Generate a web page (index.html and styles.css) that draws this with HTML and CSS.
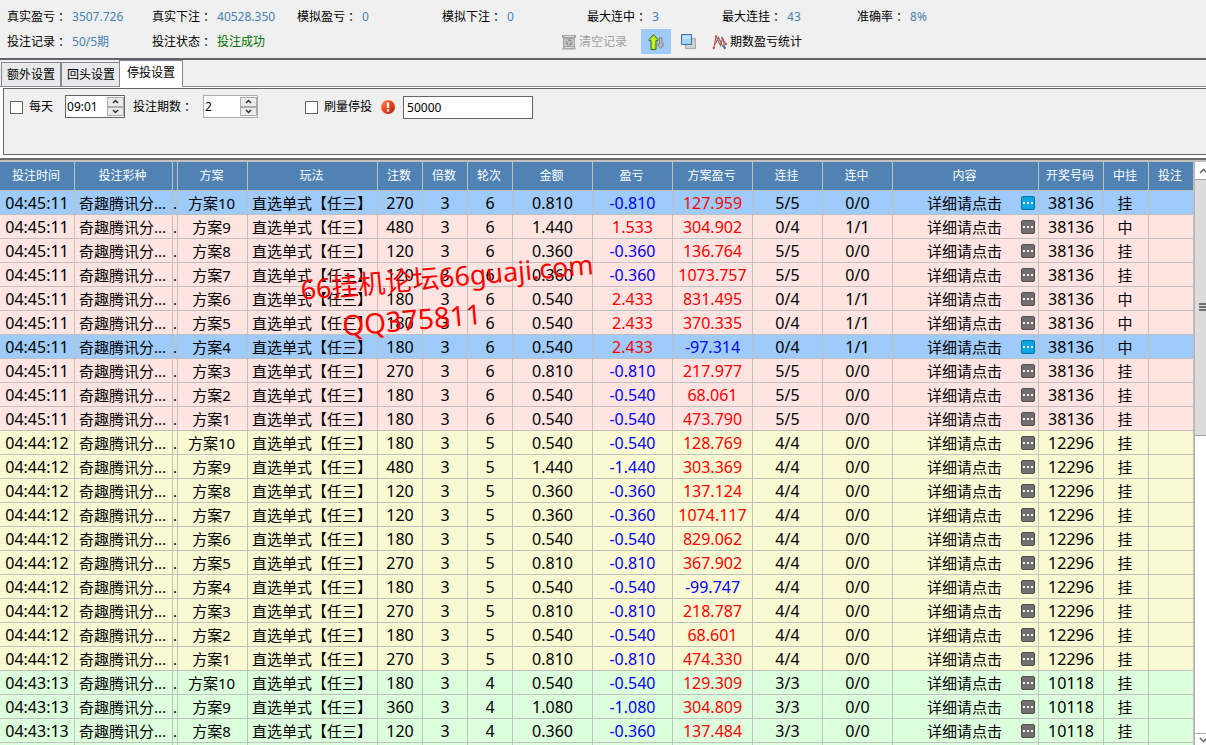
FILE: index.html
```
<!DOCTYPE html>
<html lang="zh-CN">
<head>
<meta charset="utf-8">
<title>投注记录</title>
<link rel="stylesheet" href="styles.css">
</head>
<body>
<header class="summary">
  <div class="stats">
    <div class="stat">真实盈亏<span class="colon">：</span><span class="value">3507.726</span></div>
    <div class="stat">真实下注<span class="colon">：</span><span class="value">40528.350</span></div>
    <div class="stat">模拟盈亏<span class="colon">：</span><span class="value">0</span></div>
    <div class="stat">模拟下注<span class="colon">：</span><span class="value">0</span></div>
    <div class="stat">最大连中<span class="colon">：</span><span class="value">3</span></div>
    <div class="stat">最大连挂<span class="colon">：</span><span class="value">43</span></div>
    <div class="stat">准确率<span class="colon">：</span><span class="value">8%</span></div>
  </div>
  <div class="actions">
    <div class="stat">投注记录<span class="colon">：</span><span class="value">50/5期</span></div>
    <div class="stat">投注状态<span class="colon">：</span><span class="value success">投注成功</span></div>
    <div class="toolbar">
      <button type="button" class="tool" disabled>
        <svg width="16" height="16" viewBox="0 0 16 16" aria-hidden="true"><path d="M1 1h14v3h-1v9l1 2.500H1L2 13V4H1z" fill="#a6a6a6"/><path d="M3 2.500h10M3.500 13.500h9" stroke="#dcdcdc"/><path d="M3 5h10v7H3z" fill="#c4c4c4"/><circle cx="8" cy="8.500" r="2.500" fill="none" stroke="#8a8a8a" stroke-width="1.500" stroke-dasharray="3.700 1.500"/></svg>
        清空记录
      </button>
      <button type="button" class="tool pressed" aria-label="排序" aria-pressed="true">
        <svg width="16" height="16" viewBox="0 0 16 16" aria-hidden="true"><path d="M5.500 0.700 10 5.500v1.200H8V15.500H3V6.700H1V5.500z" fill="#a4ea14" stroke="#3f6d1c"/><path d="M5.500 3v11" stroke="#d4f83c" stroke-width="2"/><path d="M11.500 3.500h2.500v6.500h1.700v1L12.800 14.500 9.800 11v-1h1.700z" fill="#b9b9b9" stroke="#858585"/></svg>
      </button>
      <button type="button" class="tool" aria-label="窗口">
        <svg width="16" height="16" viewBox="0 0 16 16" aria-hidden="true"><path d="M4.500 4.500h10v10h-10z" fill="#cfcfcf" stroke="#a9a9a9"/><path d="M.5.5h10v10H.5z" fill="#a5d4fb" stroke="#3d74a8"/><path d="M2 2h7v3H2z" fill="#c2e3ff"/></svg>
      </button>
      <button type="button" class="tool">
        <svg width="16" height="16" viewBox="0 0 16 16" fill="none" aria-hidden="true"><path d="M3 10.500 6.500 3.500 10 11l2.500 3M9.500 3l2 4 1 6" stroke="#4779ad" stroke-width="1.200"/><path d="M1.800 14 4 2.500l4.500 9L10.500 4l3.500 6.500" stroke="#dc5132" stroke-width="1.200"/><circle cx="4" cy="2.500" r="1.200" fill="#dc5132"/><circle cx="1.800" cy="14" r="1.200" fill="#dc5132"/><circle cx="14" cy="10" r="1.200" fill="#dc5132"/><circle cx="12.800" cy="14" r="1.200" fill="#4779ad"/></svg>
        期数盈亏统计
      </button>
    </div>
  </div>
</header>

<nav class="tabs" role="tablist">
  <button type="button" class="tab" role="tab">额外设置</button>
  <button type="button" class="tab" role="tab">回头设置</button>
  <button type="button" class="tab active" role="tab" aria-selected="true">停投设置</button>
</nav>

<section class="settings">
  <div class="panel">
    <label class="check"><input type="checkbox">每天</label>
    <div class="spin dark">
      <input type="text" value="09:01" aria-label="时间">
      <span class="spin-buttons">
        <button type="button" aria-label="增加时间"><svg width="7" height="5" viewBox="0 0 7 5"><path d="M1 4l2.500-2.500L6 4"/></svg></button>
        <button type="button" aria-label="减少时间"><svg width="7" height="5" viewBox="0 0 7 5"><path d="M1 1l2.500 2.500L6 1"/></svg></button>
      </span>
    </div>
    <label class="period" for="periods">投注期数<span class="colon">：</span></label>
    <div class="spin">
      <input type="text" id="periods" value="2">
      <span class="spin-buttons">
        <button type="button" aria-label="增加期数"><svg width="7" height="5" viewBox="0 0 7 5"><path d="M1 4l2.500-2.500L6 4"/></svg></button>
        <button type="button" aria-label="减少期数"><svg width="7" height="5" viewBox="0 0 7 5"><path d="M1 1l2.500 2.500L6 1"/></svg></button>
      </span>
    </div>
    <label class="check volume"><input type="checkbox">刷量停投</label>
    <svg class="alert" width="14" height="14" viewBox="0 0 14 14" aria-hidden="true"><defs><linearGradient id="alert-fill" x1="0" y1="0" x2="1" y2="1"><stop offset="0" stop-color="#ff9468"/><stop offset=".45" stop-color="#f04a1c"/><stop offset="1" stop-color="#a81c10"/></linearGradient></defs><circle cx="7" cy="7" r="7" fill="url(#alert-fill)"/><path d="M5.800 2.500h2.400v5.500H5.800zM5.800 9.200h2.400v2.300H5.800z" fill="#fff"/></svg>
    <input class="amount" type="text" value="50000" aria-label="刷量停投数值">
  </div>
</section>

<main class="records">
  <div class="viewport">
    <table>
      <colgroup>
        <col class="c-time"><col class="c-lottery"><col class="c-issue"><col class="c-plan"><col class="c-play">
        <col class="c-small"><col class="c-small"><col class="c-small">
        <col class="c-money"><col class="c-money"><col class="c-money">
        <col class="c-streak"><col class="c-streak"><col class="c-content"><col class="c-code"><col class="c-small"><col class="c-small">
      </colgroup>
      <thead>
        <tr><th>投注时间</th><th>投注彩种</th><th></th><th>方案</th><th>玩法</th><th>注数</th><th>倍数</th><th>轮次</th><th>金额</th><th>盈亏</th><th>方案盈亏</th><th>连挂</th><th>连中</th><th>内容</th><th>开奖号码</th><th>中挂</th><th>投注</th></tr>
      </thead>
      <tbody id="rows"></tbody>
    </table>
  </div>
  <div class="scrollbar" aria-hidden="true">
    <div class="arrow up"><svg width="9" height="6" viewBox="0 0 9 6"><path d="M1 5l3.500-3.500L8 5"/></svg></div>
    <div class="thumb"><i></i><i></i><i></i></div>
    <div class="arrow down"><svg width="9" height="6" viewBox="0 0 9 6"><path d="M1 1l3.500 3.500L8 1"/></svg></div>
  </div>
</main>

<div class="watermark first">66挂机论坛66guaji.com</div>
<div class="watermark second">QQ375811</div>
<script src="records.js"></script>
</body>
</html>
```

FILE: styles.css
```
* { box-sizing: border-box; }

body {
  margin: 0;
  height: 100vh;
  overflow: hidden;
  display: flex;
  flex-direction: column;
  background: #fff;
  color: #000;
  font: 12px/16px "Noto Sans", "Noto Sans CJK SC", sans-serif;
}

button, input { font: inherit; color: inherit; }
svg { display: block; flex: none; }
.colon { padding-left: 3px; margin-right: -3px; }

/* Summary */
.summary {
  background: #f0f0f0;
  border-bottom: 2px solid #646468;
  padding: 4px 0 4px 7px;
}
.stats {
  display: grid;
  grid-template-columns: repeat(4, 145px) repeat(2, 135px) 1fr;
  height: 25px;
  align-items: center;
}
.stat { white-space: nowrap; }
.value { color: #4682b4; margin-left: 5px; }
.value.success { color: #007000; }
.actions { display: flex; align-items: center; height: 25px; }
.actions .stat { width: 145px; }
.toolbar { display: flex; align-items: center; margin-left: 264px; }
.tool {
  display: flex;
  align-items: center;
  gap: 2px;
  height: 25px;
  padding: 0;
  margin-right: 10px;
  border: 0;
  background: none;
  white-space: nowrap;
}
.tool:disabled { color: #a0a0a0; margin-right: 14px; }
.tool.pressed { background: #9ecbfa; padding: 0 7px; }
.tool:last-child { margin-left: 5px; }

/* Tabs */
.tabs {
  display: flex;
  align-items: flex-end;
  height: 27px;
  padding-left: 1px;
  background: #f0f0f0;
  border-bottom: 1px solid #8c8c90;
}
.tab {
  height: 24px;
  padding: 0 5px;
  border: 1px solid #828790;
  border-bottom: 0;
  background: #e9e9eb;
}
.tab + .tab { padding: 0 4px 0 5px; }
.tab.active {
  height: 27px;
  padding: 0 7px 2px;
  margin: 0 0 -1px -1px;
  background: #fff;
}

/* Settings panel */
.settings {
  padding: 1px 0 3px 3px;
  border-bottom: 2px solid #6c6c70;
}
.panel {
  display: flex;
  align-items: flex-start;
  height: 67px;
  padding: 6px 0 0 6px;
  background: #f0f0f0;
  border: 1px solid #646464;
  border-right: 0;
}
.check { display: flex; align-items: center; gap: 6px; height: 24px; }
.check input {
  appearance: none;
  width: 13px;
  height: 13px;
  margin: 0;
  border: 1px solid #646464;
  background: #fff;
}
.period { line-height: 24px; margin: 0 10px 0 8px; white-space: nowrap; }
.period .colon { margin-right: 0; padding-right: 0; }
.period { margin-right: 7px; }
.volume { margin-left: 47px; }
.spin {
  display: flex;
  width: 55px;
  height: 23px;
  border: 1px solid #abadb3;
  background: #fff;
}
.spin.dark { width: 60px; margin-left: 12px; border-color: #646464; }
.spin input {
  flex: 1;
  min-width: 0;
  padding: 0 1px;
  border: 0;
  background: none;
}
.spin-buttons { display: flex; flex-direction: column; width: 17px; padding: 1px 0; }
.spin-buttons button {
  flex: 1;
  display: flex;
  align-items: center;
  justify-content: center;
  padding: 0;
  border: 1px solid #acacac;
  background: #ececec;
}
.spin-buttons path { fill: none; stroke: #303030; stroke-width: 1.500; }
.alert { margin: 5px 8px 0 9px; }
.amount {
  width: 130px;
  height: 23px;
  margin-top: 1px;
  padding: 0 3px;
  border: 1px solid #646464;
  background: #fff;
}

/* Records */
.records {
  flex: 1;
  min-height: 0;
  display: flex;
  border-top: 2px solid #c0c0c0;
}
.viewport { flex: 1; min-width: 0; overflow: hidden; }
table {
  width: 100%;
  table-layout: fixed;
  border-collapse: separate;
  border-spacing: 0;
}
.c-time { width: 75px; }
.c-lottery { width: 98px; }
.c-issue { width: 5px; }
.c-plan { width: 70px; }
.c-play { width: 130px; }
.c-small { width: 45px; }
.c-money { width: 80px; }
.c-streak { width: 70px; }
.c-content { width: 146px; }
.c-code { width: 65px; }
th, td {
  padding: 0 2px 0 0;
  border: solid #c0c0c0;
  border-width: 0 1px 1px 0;
  text-align: center;
  white-space: nowrap;
  overflow: hidden;
}
th {
  height: 29px;
  background: #5082b4;
  color: #fff;
  font-weight: 400;
}
td { height: 24px; font-size: 15px; line-height: 22px; }
td.num { font-size: 16px; padding: 0; }
td.left { text-align: left; padding: 0 0 0 4px; }
td.dot { text-align: left; padding: 0; }
.pink { background: #ffe4e1; }
.yellow { background: #fafad2; }
.green { background: #dcffdc; }
.selected { background: #9ecbfa; }
.gain { color: #f00; }
.loss { color: #00f; }
.detail {
  display: grid;
  grid-template-columns: 1fr auto 1fr;
  align-items: center;
}
.detail span { grid-column: 2; }
.more {
  justify-self: end;
  display: flex;
  align-items: center;
  justify-content: center;
  gap: 2px;
  width: 14px;
  height: 14px;
  margin-right: 1px;
  padding: 0;
  border: 1px solid #505050;
  border-radius: 2px;
  background: #707070;
}
.more i { width: 2px; height: 2px; background: #fff; }
.selected .more { background: #08a5e3; border-color: #0870a8; }

/* Scrollbar */
.scrollbar {
  display: flex;
  flex-direction: column;
  width: 12px;
  overflow: hidden;
  border-left: 1px solid #b4b4b4;
  background: #fff;
}
.arrow { display: flex; align-items: center; height: 17px; padding-left: 4px; overflow: hidden; }
.arrow path { fill: none; stroke: #606060; stroke-width: 1.500; }
.down { margin-top: auto; height: 12px; border-top: 1px solid #b4b4b4; }
.thumb {
  display: flex;
  flex-direction: column;
  justify-content: center;
  align-items: flex-end;
  gap: 1px;
  height: 44%;
  border: solid #a0a0a0;
  border-width: 1px 0;
  background: #dcdcdc;
}
.thumb i { width: 7px; height: 2px; background: #707070; }

/* Watermark laid over the table */
.watermark {
  position: absolute;
  color: #f00;
  font-size: 27px;
  line-height: 36px;
  white-space: nowrap;
  transform: rotate(-5deg);
  pointer-events: none;
}
.first { left: 300px; top: 259px; }
.second { left: 342px; top: 301px; font-size: 28px; }
```

FILE: records.js
```
// Each batch shares its time, round, draw number and row colour.
// Row: plan, bets, amount, profit, plan profit, losing streak, winning streak, selected
const batches = [
  { time: "04:45:11", round: 6, code: "38136", tone: "pink", rows: [
    [10, 270, "0.810", "-0.810", "127.959", "5/5", "0/0", true],
    [9, 480, "1.440", "1.533", "304.902", "0/4", "1/1"],
    [8, 120, "0.360", "-0.360", "136.764", "5/5", "0/0"],
    [7, 120, "0.360", "-0.360", "1073.757", "5/5", "0/0"],
    [6, 180, "0.540", "2.433", "831.495", "0/4", "1/1"],
    [5, 180, "0.540", "2.433", "370.335", "0/4", "1/1"],
    [4, 180, "0.540", "2.433", "-97.314", "0/4", "1/1", true],
    [3, 270, "0.810", "-0.810", "217.977", "5/5", "0/0"],
    [2, 180, "0.540", "-0.540", "68.061", "5/5", "0/0"],
    [1, 180, "0.540", "-0.540", "473.790", "5/5", "0/0"]
  ] },
  { time: "04:44:12", round: 5, code: "12296", tone: "yellow", rows: [
    [10, 180, "0.540", "-0.540", "128.769", "4/4", "0/0"],
    [9, 480, "1.440", "-1.440", "303.369", "4/4", "0/0"],
    [8, 120, "0.360", "-0.360", "137.124", "4/4", "0/0"],
    [7, 120, "0.360", "-0.360", "1074.117", "4/4", "0/0"],
    [6, 180, "0.540", "-0.540", "829.062", "4/4", "0/0"],
    [5, 270, "0.810", "-0.810", "367.902", "4/4", "0/0"],
    [4, 180, "0.540", "-0.540", "-99.747", "4/4", "0/0"],
    [3, 270, "0.810", "-0.810", "218.787", "4/4", "0/0"],
    [2, 180, "0.540", "-0.540", "68.601", "4/4", "0/0"],
    [1, 270, "0.810", "-0.810", "474.330", "4/4", "0/0"]
  ] },
  { time: "04:43:13", round: 4, code: "10118", tone: "green", rows: [
    [10, 180, "0.540", "-0.540", "129.309", "3/3", "0/0"],
    [9, 360, "1.080", "-1.080", "304.809", "3/3", "0/0"],
    [8, 120, "0.360", "-0.360", "137.484", "3/3", "0/0"]
  ] }
];

const sign = (n) => (n.startsWith("-") ? "loss" : "gain");
const num = (v, extra = "") => `<td class="num ${extra}">${v}</td>`;
const more = '<button type="button" class="more" aria-label="详细"><i></i><i></i><i></i></button>';
const blankRow = `<tr class="green">${"<td></td>".repeat(17)}</tr>`;

document.getElementById("rows").innerHTML = batches.flatMap((b) =>
  b.rows.map(([plan, bets, amount, profit, total, lose, win, selected]) =>
    `<tr class="${selected ? "selected" : b.tone}">` +
    num(b.time) +
    `<td class="left">奇趣腾讯分...</td><td class="dot">.</td><td>方案${plan}</td>` +
    '<td class="left">直选单式【任三】</td>' +
    num(bets) + num(3) + num(b.round) + num(amount) +
    num(profit, sign(profit)) + num(total, sign(total)) + num(lose) + num(win) +
    `<td><div class="detail"><span>详细请点击</span>${more}</div></td>` +
    num(b.code) +
    `<td>${win === "1/1" ? "中" : "挂"}</td><td></td></tr>`
  )
).join("") + blankRow;
```
